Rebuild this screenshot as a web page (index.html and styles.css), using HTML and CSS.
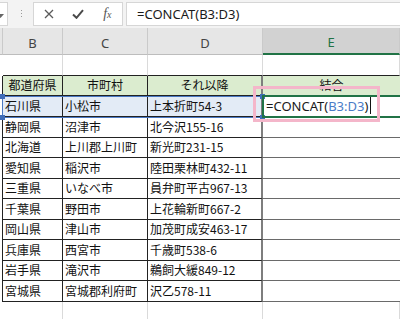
FILE: index.html
```html
<!DOCTYPE html>
<html lang="ja">
<head>
<meta charset="utf-8">
<title>CONCAT</title>
<link rel="stylesheet" href="styles.css">
</head>
<body>
<div class="app">
  <div class="fbar">
    <div class="namebox">
      <svg class="dd" width="8" height="24" viewBox="0 0 8 24"><polygon points="-3,11 4,11 0.5,15" fill="#666"/></svg>
    </div>
    <div class="grip"><span></span><span></span><span></span></div>
    <div class="btns">
      <div class="slot"><svg width="10" height="10" viewBox="0 0 10 10"><path d="M1 1 L9 9 M9 1 L1 9" stroke="#5a5a5a" stroke-width="1.3" fill="none"/></svg></div>
      <div class="slot"><svg width="12" height="10" viewBox="0 0 12 10"><path d="M1 5.5 L4.5 8.8 L11 1.2" stroke="#4a4a4a" stroke-width="2" fill="none"/></svg></div>
      <div class="slot"><span class="fx">f<span class="fxx">x</span></span></div>
    </div>
    <div class="formula">=CONCAT(B3:D3)</div>
  </div>

  <div class="sheet">
    <div class="row colhead">
      <div class="c0"></div><div class="h">B</div><div class="h">C</div><div class="h">D</div><div class="h sel">E</div>
    </div>
    <div class="row blank r21">
      <div class="c0"></div><div class="g top"></div><div class="g top"></div><div class="g top"></div><div class="g top"></div>
    </div>
    <div class="row data thead r20">
      <div class="c0 lb"></div><div class="b ctr">都道府県</div><div class="b ctr">市町村</div><div class="b d ctr">それ以降</div><div class="b e ctr">結合</div>
    </div>
    <div class="row data hl r21">
      <div class="c0 lb"></div><div class="b">石川県</div><div class="b">小松市</div><div class="b d">上本折町54-3</div><div class="b e edit"><span class="ftx">=CONCAT(<span class="ref">B3:D3</span>)</span><span class="caret"></span></div>
    </div>
    <div class="row data r21">
      <div class="c0 lb"></div><div class="b">静岡県</div><div class="b">沼津市</div><div class="b d">北今沢155-16</div><div class="b e"></div>
    </div>
    <div class="row data r20">
      <div class="c0 lb"></div><div class="b">北海道</div><div class="b">上川郡上川町</div><div class="b d">新光町231-15</div><div class="b e"></div>
    </div>
    <div class="row data r21">
      <div class="c0 lb"></div><div class="b">愛知県</div><div class="b">稲沢市</div><div class="b d">陸田栗林町432-11</div><div class="b e"></div>
    </div>
    <div class="row data r20">
      <div class="c0 lb"></div><div class="b">三重県</div><div class="b">いなべ市</div><div class="b d">員弁町平古967-13</div><div class="b e"></div>
    </div>
    <div class="row data r21">
      <div class="c0 lb"></div><div class="b">千葉県</div><div class="b">野田市</div><div class="b d">上花輪新町667-2</div><div class="b e"></div>
    </div>
    <div class="row data r20">
      <div class="c0 lb"></div><div class="b">岡山県</div><div class="b">津山市</div><div class="b d">加茂町成安463-17</div><div class="b e"></div>
    </div>
    <div class="row data r21">
      <div class="c0 lb"></div><div class="b">兵庫県</div><div class="b">西宮市</div><div class="b d">千歳町538-6</div><div class="b e"></div>
    </div>
    <div class="row data r20">
      <div class="c0 lb"></div><div class="b">岩手県</div><div class="b">滝沢市</div><div class="b d">鵜飼大緩849-12</div><div class="b e"></div>
    </div>
    <div class="row data r21">
      <div class="c0 lb"></div><div class="b">宮城県</div><div class="b">宮城郡利府町</div><div class="b d">沢乙578-11</div><div class="b e"></div>
    </div>
    <div class="row blank r17">
      <div class="c0"></div><div class="g"></div><div class="g"></div><div class="g"></div><div class="g"></div>
    </div>
  </div>

  <div class="range">
    <span class="hd tl"></span><span class="hd bl"></span><span class="hd tr"></span><span class="hd br"></span>
  </div>
  <div class="active"></div>
  <div class="pink"></div>
</div>
</body>
</html>
```

FILE: styles.css
```css
* { box-sizing: border-box; }
html, body { margin: 0; padding: 0; background: #fff; }
.app {
  position: relative;
  width: 400px;
  height: 319px;
  overflow: hidden;
  font-family: "Noto Sans CJK JP", "Noto Sans", sans-serif;
  color: #111;
}

/* formula bar */
.fbar {
  display: flex;
  align-items: stretch;
  height: 28px;
  padding: 2px 0 2px 0;
  background: #f3f3f3;
}
.namebox {
  width: 8px;
  background: #fff;
  border: 1px solid #d6d6d6;
  border-left: none;
  overflow: hidden;
}
.dd { display: block; }
.grip {
  display: flex;
  flex-direction: column;
  gap: 2px;
  margin: 8px 11px 0 13px;
}
.grip span { width: 1px; height: 1px; background: #9a9a9a; }
.btns {
  display: flex;
  width: 90px;
  background: #fff;
  border: 1px solid #d6d6d6;
  margin-right: 3px;
}
.slot {
  width: 30px;
  display: flex;
  align-items: center;
  justify-content: center;
}
.slot:first-child { padding-left: 1px; }
.fx {
  font-family: "Liberation Serif", serif;
  font-style: italic;
  font-size: 14px;
  color: #555;
  line-height: 1;
}
.fxx { font-size: 10px; }
.formula {
  flex: 1;
  background: #fff;
  border: 1px solid #d6d6d6;
  border-right: none;
  padding-left: 10px;
  font-family: "Noto Sans", sans-serif;
  font-size: 13px;
  line-height: 22px;
  color: #1a1a1a;
}

/* sheet */
.row {
  display: grid;
  grid-template-columns: 3px 60px 85px 115px 137px;
}
.r17 { height: 17px; }
.r20 { height: 20px; }
.r21 { height: 21px; }
.colhead { height: 27px; background: #e6e6e6; }
.colhead > div {
  border-right: 1px solid #cacaca;
  border-bottom: 1px solid #bdbdbd;
}
.h {
  display: flex;
  align-items: center;
  justify-content: center;
  padding-top: 3px;
  font-family: "Noto Sans", sans-serif;
  font-size: 13px;
  color: #444;
}
.h.sel {
  background: #d2d2d2;
  color: #217346;
  border-bottom: 2px solid #217346;
}
.g { border-right: 1px solid #dadada; }
.g.top { border-bottom: 1px solid #222; }
.c0.lb { border-right: 1px solid #222; }

.data > div {
  display: flex;
  align-items: center;
  padding: 0 0 2px 2px;
  font-size: 12px;
  white-space: nowrap;
  overflow: hidden;
}
.b {
  border-right: 1px solid #222;
  border-bottom: 1px solid #222;
}
.b.d { border-right: 2px solid #7e7e7e; }
.b.e { border-right: none; border-bottom-color: #6a6a6a; }
.data > .ctr { justify-content: center; padding-left: 0; }
.thead > .b { background: #dbeccf; }
.hl > .b { background: #e3ebf6; }
.hl > .b.e { background: #fff; }
.data > .edit { padding-left: 3px; padding-bottom: 1px; }
.ftx {
  font-family: "Noto Sans", sans-serif;
  font-size: 13px;
  color: #1a1a1a;
}
.ref { color: #4a7cc7; }
.caret {
  display: inline-block;
  width: 1px;
  height: 17px;
  margin-left: 2px;
  background: #111;
}

/* overlays */
.range {
  position: absolute;
  left: 2px;
  top: 96px;
  width: 261px;
  height: 22px;
  border: 1px solid #4a78c2;
}
.hd {
  position: absolute;
  width: 5px;
  height: 5px;
  background: #3f6db8;
}
.tl { left: -3px; top: -3px; }
.bl { left: -3px; bottom: -3px; }
.tr { right: -3px; top: -3px; }
.br { right: -3px; bottom: -3px; }
.active {
  position: absolute;
  left: 262px;
  top: 95px;
  width: 145px;
  height: 23px;
  border: 2px solid #217346;
}
.pink {
  position: absolute;
  left: 253px;
  top: 86px;
  width: 127px;
  height: 36px;
  border: 3px solid #f4b6ca;
}
```
